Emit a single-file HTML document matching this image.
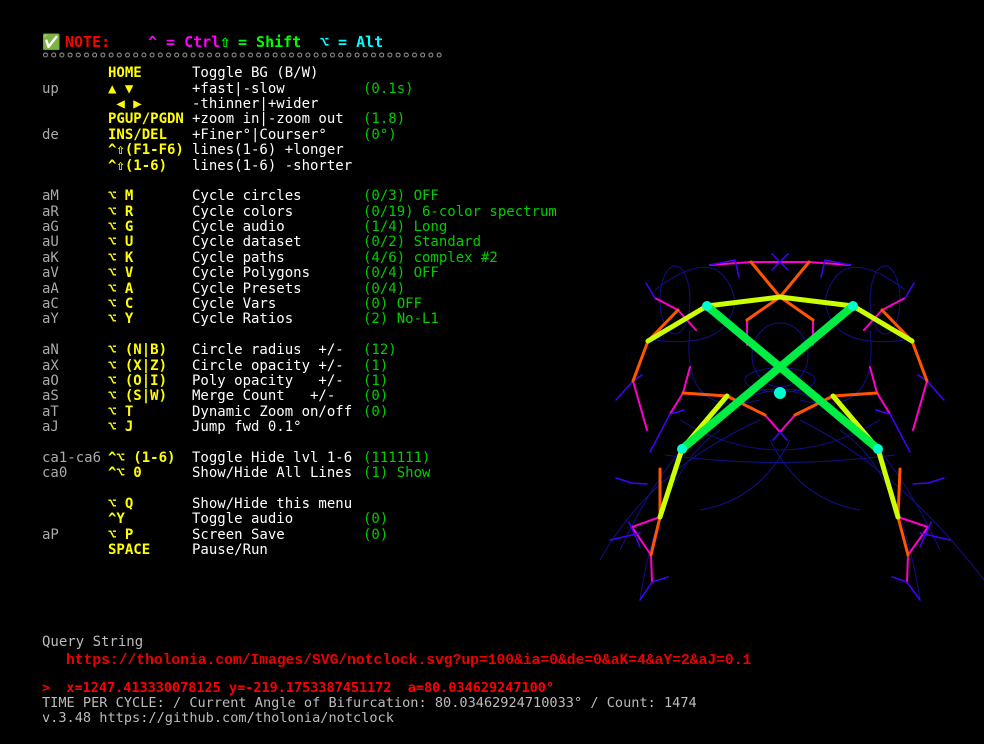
<!DOCTYPE html>
<html><head><meta charset="utf-8">
<style>
html,body{margin:0;padding:0;background:#000;width:984px;height:744px;overflow:hidden;position:relative}
.r{position:absolute;height:16px;font:14px/16px "DejaVu Sans Mono","Liberation Mono",monospace;white-space:pre}
.r span{position:absolute;top:0}
.l{left:42px;color:#aaa}
.k{left:108px;color:#ff0;font-weight:bold}
.d{left:192px;color:#fff}
.v{left:363px;color:#0c0}
#svg{position:absolute;left:0;top:0}
</style></head><body>
<div class="r" style="top:34px;left:42px;font-weight:bold;font-size:15px"><span style="left:0;color:#2c2">✅</span><span style="left:23px;color:#f00">NOTE:</span><span style="left:106px;color:#f0f">^ = Ctrl</span><span style="left:178px;color:#0f0;font-size:17px">⇧</span><span style="left:196px;color:#0f0">= Shift</span><span style="left:278px;color:#0ff">⌥ = Alt</span></div>

<div class="r" style="top:65px;left:0;width:984px"><span class="k">HOME</span><span class="d">Toggle BG (B/W)</span></div>
<div class="r" style="top:81px;left:0;width:984px"><span class="l">up</span><span class="k">▲ ▼</span><span class="d">+fast|-slow</span><span class="v">(0.1s)</span></div>
<div class="r" style="top:96px;left:0;width:984px"><span class="k"> ◀ ▶</span><span class="d">-thinner|+wider</span></div>
<div class="r" style="top:111px;left:0;width:984px"><span class="k">PGUP/PGDN</span><span class="d">+zoom in|-zoom out</span><span class="v">(1.8)</span></div>
<div class="r" style="top:127px;left:0;width:984px"><span class="l">de</span><span class="k">INS/DEL</span><span class="d">+Finer°|Courser°</span><span class="v">(0°)</span></div>
<div class="r" style="top:142px;left:0;width:984px"><span class="k">^⇧(F1-F6)</span><span class="d">lines(1-6) +longer</span></div>
<div class="r" style="top:158px;left:0;width:984px"><span class="k">^⇧(1-6)</span><span class="d">lines(1-6) -shorter</span></div>

<div class="r" style="top:188px;left:0;width:984px"><span class="l">aM</span><span class="k">⌥ M</span><span class="d">Cycle circles</span><span class="v">(0/3) OFF</span></div>
<div class="r" style="top:204px;left:0;width:984px"><span class="l">aR</span><span class="k">⌥ R</span><span class="d">Cycle colors</span><span class="v">(0/19) 6-color spectrum</span></div>
<div class="r" style="top:219px;left:0;width:984px"><span class="l">aG</span><span class="k">⌥ G</span><span class="d">Cycle audio</span><span class="v">(1/4) Long</span></div>
<div class="r" style="top:234px;left:0;width:984px"><span class="l">aU</span><span class="k">⌥ U</span><span class="d">Cycle dataset</span><span class="v">(0/2) Standard</span></div>
<div class="r" style="top:250px;left:0;width:984px"><span class="l">aK</span><span class="k">⌥ K</span><span class="d">Cycle paths</span><span class="v">(4/6) complex #2</span></div>
<div class="r" style="top:265px;left:0;width:984px"><span class="l">aV</span><span class="k">⌥ V</span><span class="d">Cycle Polygons</span><span class="v">(0/4) OFF</span></div>
<div class="r" style="top:281px;left:0;width:984px"><span class="l">aA</span><span class="k">⌥ A</span><span class="d">Cycle Presets</span><span class="v">(0/4)</span></div>
<div class="r" style="top:296px;left:0;width:984px"><span class="l">aC</span><span class="k">⌥ C</span><span class="d">Cycle Vars</span><span class="v">(0) OFF</span></div>
<div class="r" style="top:311px;left:0;width:984px"><span class="l">aY</span><span class="k">⌥ Y</span><span class="d">Cycle Ratios</span><span class="v">(2) No-L1</span></div>

<div class="r" style="top:342px;left:0;width:984px"><span class="l">aN</span><span class="k">⌥ (N|B)</span><span class="d">Circle radius  +/-</span><span class="v">(12)</span></div>
<div class="r" style="top:358px;left:0;width:984px"><span class="l">aX</span><span class="k">⌥ (X|Z)</span><span class="d">Circle opacity +/-</span><span class="v">(1)</span></div>
<div class="r" style="top:373px;left:0;width:984px"><span class="l">aO</span><span class="k">⌥ (O|I)</span><span class="d">Poly opacity   +/-</span><span class="v">(1)</span></div>
<div class="r" style="top:388px;left:0;width:984px"><span class="l">aS</span><span class="k">⌥ (S|W)</span><span class="d">Merge Count   +/-</span><span class="v">(0)</span></div>
<div class="r" style="top:404px;left:0;width:984px"><span class="l">aT</span><span class="k">⌥ T</span><span class="d">Dynamic Zoom on/off</span><span class="v">(0)</span></div>
<div class="r" style="top:419px;left:0;width:984px"><span class="l">aJ</span><span class="k">⌥ J</span><span class="d">Jump fwd 0.1°</span></div>

<div class="r" style="top:450px;left:0;width:984px"><span class="l">ca1-ca6</span><span class="k">^⌥ (1-6)</span><span class="d">Toggle Hide lvl 1-6</span><span class="v">(111111)</span></div>
<div class="r" style="top:465px;left:0;width:984px"><span class="l">ca0</span><span class="k">^⌥ 0</span><span class="d">Show/Hide All Lines</span><span class="v">(1) Show</span></div>

<div class="r" style="top:496px;left:0;width:984px"><span class="k">⌥ Q</span><span class="d">Show/Hide this menu</span></div>
<div class="r" style="top:511px;left:0;width:984px"><span class="k">^Y</span><span class="d">Toggle audio</span><span class="v">(0)</span></div>
<div class="r" style="top:527px;left:0;width:984px"><span class="l">aP</span><span class="k">⌥ P</span><span class="d">Screen Save</span><span class="v">(0)</span></div>
<div class="r" style="top:542px;left:0;width:984px"><span class="k">SPACE</span><span class="d">Pause/Run</span></div>

<div class="r" style="top:634px;left:42px;color:#bbb">Query String</div>
<div class="r" style="top:653px;left:66px;color:#e00;font:bold 14.65px/16px 'Liberation Mono',monospace">https://tholonia.com/Images/SVG/notclock.svg?up=100&amp;ia=0&amp;de=0&amp;aK=4&amp;aY=2&amp;aJ=0.1</div>
<div class="r" style="top:680px;left:42px;color:#f00;font-weight:bold;font-size:13.5px">&gt;  x=1247.413330078125 y=-219.1753387451172  a=80.034629247100°</div>
<div class="r" style="top:695px;left:42px;color:#bbb;font-size:13.6px">TIME PER CYCLE: / Current Angle of Bifurcation: 80.03462924710033° / Count: 1474</div>
<div class="r" style="top:710px;left:42px;color:#bbb;font-size:13.6px">v.3.48 https://github.com/tholonia/notclock</div>

<svg id="svg" width="984" height="744" viewBox="0 0 984 744">
<defs><pattern id="dots" x="42" y="51" width="8.2" height="8" patternUnits="userSpaceOnUse"><circle cx="3.5" cy="4" r="2" fill="none" stroke="#999" stroke-width="1"/></pattern></defs>
<rect x="42" y="51" width="400" height="8" fill="url(#dots)"/>
<g fill="none" stroke="#10108a" stroke-width="1">
<ellipse cx="675" cy="300" rx="15" ry="34"/><ellipse cx="885" cy="300" rx="15" ry="34"/>
<ellipse cx="780" cy="355" rx="28" ry="32"/><ellipse cx="780" cy="380" rx="35" ry="12"/>
<path d="M655 290 Q720 240 735 300 Q730 350 655 340"/><path d="M905 290 Q840 240 825 300 Q830 350 905 340"/>
<path d="M680 420 Q780 480 880 420"/><path d="M665 455 Q780 470 895 455"/>
<path d="M620 550 Q700 380 800 390"/><path d="M940 550 Q860 380 760 390"/>
<path d="M600 560 Q650 470 760 420"/><path d="M984 580 Q900 470 800 420"/>
<path d="M640 600 Q660 470 720 430"/><path d="M920 600 Q900 470 840 430"/>
<path d="M690 330 Q680 420 760 400"/><path d="M870 330 Q880 420 800 400"/>
<path d="M700 510 Q760 500 790 440"/><path d="M860 510 Q800 500 770 440"/>
</g>
<g stroke-linecap="round" fill="none">
<g stroke="#f0c" stroke-width="2">
<path d="M710 265 L751 262 L780 262 L809 262 L850 265"/>
<path d="M655 298 L678 310 L696 330"/><path d="M905 298 L882 310 L864 330"/>
<path d="M647 430 L633 381"/><path d="M913 430 L927 381"/>
<path d="M683 393 L670 414"/><path d="M877 393 L890 414"/>
<path d="M765 415 L780 432 L795 415"/>
<path d="M660 517 L632 527 L651 555"/><path d="M898 517 L928 527 L908 555"/>
<path d="M651 555 L652 582"/><path d="M908 555 L907 582"/>
<path d="M747 320 L747 345"/><path d="M813 320 L813 345"/>
<path d="M690 367 L683 393"/><path d="M870 367 L877 393"/>
</g>
<g stroke="#40f" stroke-width="1.5">
<path d="M710 265 L735 260 L739 277"/><path d="M850 265 L825 260 L821 277"/>
<path d="M772 254 L780 262 L788 254"/><path d="M772 270 L780 262 L788 270"/>
<path d="M646 283 L655 298"/><path d="M914 283 L905 298"/>
<path d="M616 400 L633 381 L642 375"/><path d="M944 400 L927 381 L918 375"/>
<path d="M650 452 L670 414 L684 410"/><path d="M910 452 L890 414 L876 410"/>
<path d="M616 478 L632 483 L647 484"/><path d="M944 478 L928 483 L913 484"/>
<path d="M629 522 L640 547"/><path d="M931 522 L920 547"/>
<path d="M640 600 L652 582 L668 577"/><path d="M920 600 L907 582 L892 577"/>
<path d="M773 440 L780 432 L787 440"/>
<path d="M610 540 L640 533"/><path d="M950 540 L920 533"/>
</g>
<g stroke="#f50" stroke-width="3">
<path d="M780 297 L751 262"/><path d="M780 297 L809 262"/>
<path d="M780 297 L747 320"/><path d="M780 297 L813 320"/>
<path d="M648 341 L678 310"/><path d="M912 341 L882 310"/>
<path d="M648 341 L633 381"/><path d="M912 341 L927 381"/>
<path d="M727 396 L683 393"/><path d="M833 396 L877 393"/>
<path d="M727 396 L765 415"/><path d="M833 396 L795 415"/>
<path d="M660 517 L651 555"/><path d="M898 517 L908 555"/>
<path d="M660 469 L660 517"/><path d="M900 469 L898 517"/>
</g>
<g stroke="#cf0" stroke-width="5">
<path d="M707 306 L780 297 L853 306"/>
<path d="M707 306 L648 341"/><path d="M853 306 L912 341"/>
<path d="M682 449 L727 396"/><path d="M878 449 L833 396"/>
<path d="M682 449 L660 517"/><path d="M878 449 L898 517"/>
</g>
<g stroke="#0e4" stroke-width="8">
<path d="M707 306 L878 449"/><path d="M853 306 L682 449"/>
</g>
<g fill="#0fc" stroke="none">
<circle cx="707" cy="306" r="5"/><circle cx="853" cy="306" r="5"/>
<circle cx="682" cy="449" r="5"/><circle cx="878" cy="449" r="5"/>
<circle cx="780" cy="393" r="6"/>
</g>
</g>
</svg>
</body></html>
